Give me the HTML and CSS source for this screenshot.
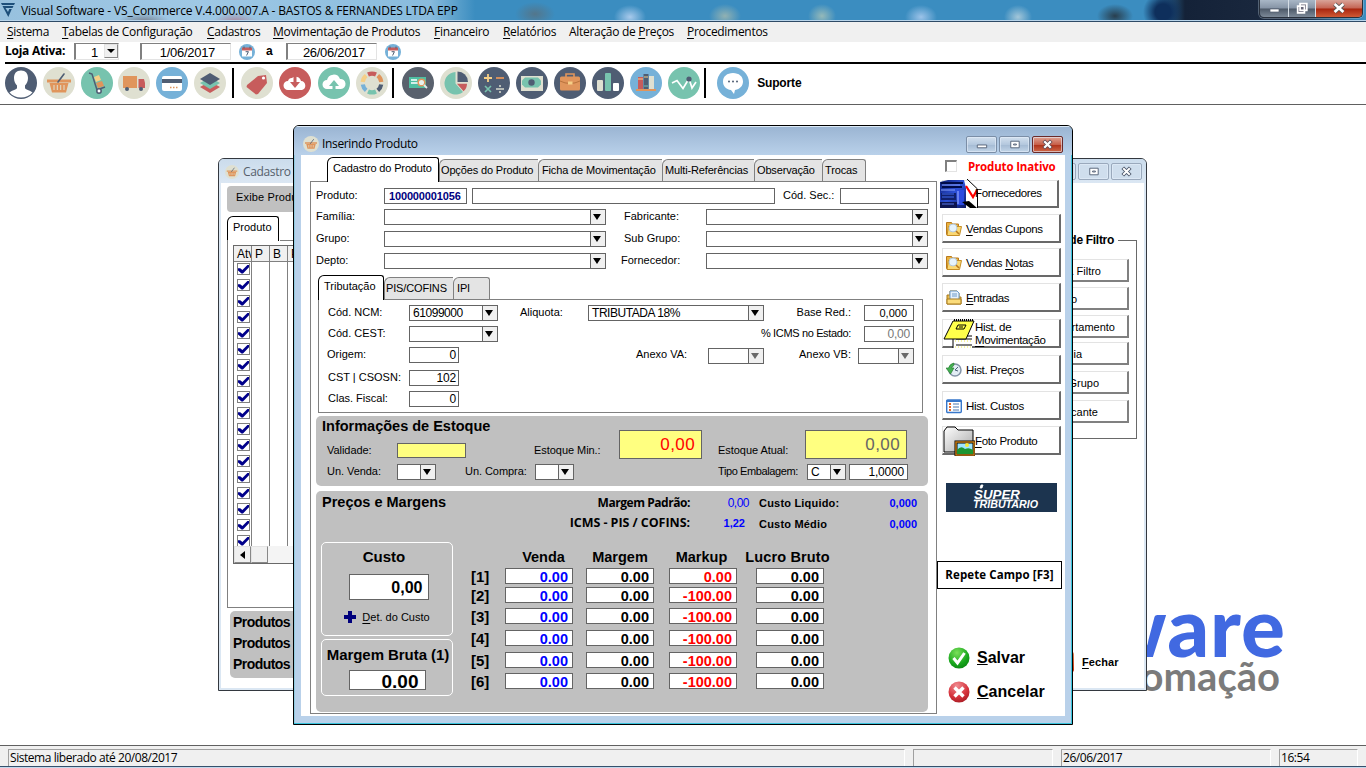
FILE: index.html
```html
<!DOCTYPE html>
<html lang="pt-BR">
<head>
<meta charset="utf-8">
<title>Visual Software - VS_Commerce</title>
<link rel="stylesheet" href="styles.css">
</head>
<body>
<svg class="defs" width="0" height="0">
  <defs>
    <linearGradient id="gTruck" x1="0" y1="0" x2="1" y2="1"><stop offset="0" stop-color="#0a1c70"/><stop offset=".5" stop-color="#2c50d8"/><stop offset="1" stop-color="#0b1760"/></linearGradient>
    <radialGradient id="gGreen" cx=".4" cy=".25" r=".9"><stop offset="0" stop-color="#7be05a"/><stop offset=".6" stop-color="#17a51c"/><stop offset="1" stop-color="#067a0c"/></radialGradient>
    <radialGradient id="gRed" cx=".4" cy=".2" r=".9"><stop offset="0" stop-color="#f08a90"/><stop offset=".6" stop-color="#d5323b"/><stop offset="1" stop-color="#a01820"/></radialGradient>
    <linearGradient id="gFolder" x1="0" y1="0" x2="1" y2="1"><stop offset="0" stop-color="#fff"/><stop offset="1" stop-color="#a8a8a8"/></linearGradient>
  </defs>
  <symbol id="basket" viewBox="0 0 32 32"><circle cx="16" cy="16" r="16" fill="#dfe0d1"/><path d="M4 12.500h24v3H4zM6.500 16h19L23 25.500H9z" fill="#e0955c"/><path d="M11 18v5M14.300 18v5M17.700 18v5M21 18v5" stroke="#dfe0d1" stroke-width="1"/><path d="M15 15 21 7" stroke="#4f5d73" stroke-width="1.600" stroke-linecap="round"/></symbol>
  <symbol id="calendar" viewBox="0 0 16 16"><circle cx="8" cy="8" r="8" fill="#76b1d8"/><path d="M3 4h10v8.500H3z" fill="#fff"/><path d="M3 3.500h10v3H3z" fill="#c75c5c"/><path d="M5 2.500v2M11 2.500v2" stroke="#4f5d73"/><path d="M6.600 7.700h2.800L7.600 11.500" stroke="#4f5d73" fill="none"/></symbol>
  <symbol id="folder" viewBox="0 0 16 16"><path d="M.5 1.500h5l1 1.500h6v10.500H.5z" fill="#e9b23f" stroke="#b9791c"/><path d="M2.500 5.500h13l-2 9H1z" fill="#fbd873" stroke="#c58f27"/><circle cx="7" cy="7" r="4" fill="#e6f3fc" stroke="#b4c9dc"/><path d="m10 10 3 3" stroke="#b9791c" stroke-width="1.600"/></symbol>
</svg>

<header class="titlebar">
  <svg class="applogo" viewBox="0 0 14 14"><path d="M0 0h14l-1 2H1zM1.500 3h11l-1 2h-7L7 9l1.300-3h2.500L7.300 14z" fill="#1d4f7a"/></svg>
  <span class="apptitle">Visual Software - VS_Commerce V.4.000.007.A - BASTOS &amp; FERNANDES LTDA EPP</span>
  <div class="winctl">
    <span class="wc wmin"><svg viewBox="0 0 28 17"><path d="M10 9h9v3h-9z" fill="#fff" stroke="#555e70" stroke-width=".7"/></svg></span>
    <span class="wc wmax"><svg viewBox="0 0 27 17"><path d="M11.500 3.500h7v7h-7zM9 6h7v7H9z" fill="#667" stroke="#fff" stroke-width="1.800"/></svg></span>
    <span class="wc wclose"><svg viewBox="0 0 47 17"><path d="m19 4 9 8m0-8-9 8" stroke="#555" stroke-width="4.500"/><path d="m19 4 9 8m0-8-9 8" stroke="#fff" stroke-width="2.800"/></svg></span>
  </div>
</header>

<nav class="menubar">
  <span class="m1"><u>S</u>istema</span><span class="m2"><u>T</u>abelas de Configuração</span><span class="m3"><u>C</u>adastros</span><span class="m4"><u>M</u>ovimentação de Produtos</span><span class="m5"><u>F</u>inanceiro</span><span class="m6"><u>R</u>elatórios</span><span class="m7">Alteração de <u>P</u>reços</span><span class="m8"><u>P</u>rocedimentos</span>
</nav>

<div class="filterbar">
  <b class="loja">Loja Ativa:</b>
  <span class="sunk store">1<i class="drop"></i></span>
  <span class="sunk d1">1/06/2017</span>
  <svg class="cal"><use href="#calendar"/></svg>
  <b class="a">a</b>
  <span class="sunk d2">26/06/2017</span>
  <svg class="cal"><use href="#calendar"/></svg>
</div>

<div class="toolbar">
  <div class="tools g1">
    <svg viewBox="0 0 32 32"><circle cx="16" cy="16" r="16" fill="#4f5d73"/><path d="M16 3.500c-4.700 0-7 3-7 7.500 0 3 1.200 6 3 7.500v2.500c0 1.800-5 2-7.500 4.500 3 3.500 7 5 11.500 5s8.500-1.500 11.500-5C25 23 20 22.800 20 21v-2.500c1.800-1.500 3-4.500 3-7.500 0-4.500-2.300-7.500-7-7.500z" fill="#fff"/></svg>
    <svg><use href="#basket"/></svg>
    <svg viewBox="0 0 32 32"><circle cx="16" cy="16" r="16" fill="#77c3ae"/><path d="m8 6 3 1 5 16 8-3" stroke="#4f5d73" stroke-width="1.500" fill="none"/><path d="m13 10 5-2 2 5-5 2z" fill="#f5cf87"/><path d="m15 16 6-2 2 5-6 2z" fill="#e0955c"/><circle cx="18" cy="24" r="2.200" fill="#fff" stroke="#4f5d73" stroke-width="1.500"/></svg>
    <svg viewBox="0 0 32 32"><circle cx="16" cy="16" r="16" fill="#dfe0d1"/><path d="M5 9h14v12H5z" fill="#e0955c"/><path d="M20.500 12H26l1 4v5h-6.500z" fill="#c75c5c"/><circle cx="9" cy="22" r="2" fill="#4f5d73"/><circle cx="23" cy="22" r="2" fill="#4f5d73"/></svg>
    <svg viewBox="0 0 32 32"><circle cx="16" cy="16" r="16" fill="#76b1d8"/><rect x="6" y="9" width="20" height="15" rx="2" fill="#fff"/><path d="M6 12h20v4H6z" fill="#4f5d73"/><path d="M14 20.500h9" stroke="#e0955c" stroke-width="1.500" stroke-dasharray="1.500 1.500"/></svg>
    <svg viewBox="0 0 32 32"><circle cx="16" cy="16" r="16" fill="#dfe0d1"/><path d="m6 20 10-5.500L26 20l-10 6z" fill="#c75c5c"/><path d="m6 16 10-5.500L26 16l-10 6z" fill="#77c3ae"/><path d="m6 12 10-6 10 6-10 6z" fill="#4f5d73"/></svg>
  </div>
  <i class="sep"></i>
  <div class="tools g2">
    <svg viewBox="0 0 32 32"><circle cx="16" cy="16" r="16" fill="#dfe0d1"/><path d="m6 18 11-9 8-1 1 8-9 11-2 .5L5.500 20z" fill="#c75c5c"/><circle cx="22.500" cy="11" r="1.600" fill="#fff"/></svg>
    <svg viewBox="0 0 32 32"><circle cx="16" cy="16" r="16" fill="#c75c5c"/><path d="M9 23a4.500 4.500 0 0 1 0-9 4 4 0 0 1 4-3 5.500 5.500 0 0 1 9 3 4.600 4.600 0 0 1 1 9z" fill="#fff"/><path d="M16 7v10" stroke="#c75c5c" stroke-width="3"/><path d="M11 15h10l-5 6z" fill="#c75c5c"/></svg>
    <svg viewBox="0 0 32 32"><circle cx="16" cy="16" r="16" fill="#77c3ae"/><path d="M9 22a4.500 4.500 0 0 1 0-9 6.800 6.800 0 0 1 13-1 5 5 0 0 1 1 10z" fill="#fff"/><path d="M16 27V18" stroke="#77c3ae" stroke-width="3"/><path d="M11 19h10l-5-6z" fill="#77c3ae"/></svg>
    <svg viewBox="0 0 32 32"><circle cx="16" cy="16" r="16" fill="#dfe0d1"/><g fill="none" stroke-width="4.200"><path d="M12 7.500a9.300 9.300 0 0 1 8 0" stroke="#c75c5c"/><path d="M21.800 8.700a9.300 9.300 0 0 1 3.500 6.200" stroke="#e0955c"/><path d="M25.200 17.500a9.300 9.300 0 0 1-3.400 5.800" stroke="#4f5d73"/><path d="M20 24.500a9.300 9.300 0 0 1-8 0" stroke="#77c3ae"/><path d="M10.200 23.300a9.300 9.300 0 0 1-3.400-5.800" stroke="#76b1d8"/><path d="M6.700 14.900a9.300 9.300 0 0 1 3.500-6.200" stroke="#f5cf87"/></g></svg>
  </div>
  <i class="sep s2"></i>
  <div class="tools g3">
    <svg viewBox="0 0 32 32"><circle cx="16" cy="16" r="16" fill="#59616d"/><path d="M7 10h17v11H7z" fill="#4fbfa2"/><path d="M9 13h6M9 16h8" stroke="#fff" stroke-width="1.300"/><circle cx="19.500" cy="15.500" r="3.300" fill="#e8f2ee" stroke="#e0955c" stroke-width="1.500"/><path d="m22 18 3 3" stroke="#e8e8e8" stroke-width="1.800"/></svg>
    <svg viewBox="0 0 32 32"><circle cx="16" cy="16" r="16" fill="#dfe0d1"/><path d="M15.500 16.500V5A11.300 11.300 0 1 0 23 25z" fill="#77c3ae"/><path d="M17.500 15V4.500A10.500 10.500 0 0 1 28 15z" fill="#4f5d73"/><path d="M17 16.800h10a10 10 0 0 1-3.500 7.500z" fill="#c75c5c"/></svg>
    <svg viewBox="0 0 32 32"><circle cx="16" cy="16" r="16" fill="#4f5d73"/><path d="M6 11h8M10 7v8" stroke="#f5cf87" stroke-width="1.800"/><path d="M18 11h8" stroke="#e0955c" stroke-width="1.800"/><path d="m7 19 6 6m0-6-6 6" stroke="#77c3ae" stroke-width="1.600"/><path d="M18 22h8" stroke="#dfe0d1" stroke-width="1.400"/><circle cx="22" cy="19" r="1" fill="#dfe0d1"/><circle cx="22" cy="25" r="1" fill="#dfe0d1"/></svg>
    <svg viewBox="0 0 32 32"><circle cx="16" cy="16" r="16" fill="#4f5d73"/><path d="M5 9h22v15H5z" fill="#dfe0d1"/><path d="M9 10.500h13l3 3v4l-3 3H9l-3-3v-4z" fill="#77c3ae"/><circle cx="15.500" cy="15.500" r="3.200" fill="#4f5d73"/></svg>
    <svg viewBox="0 0 32 32"><circle cx="16" cy="16" r="16" fill="#4f5d73"/><path d="M12 10V7h8v3" fill="none" stroke="#e0955c" stroke-width="1.600"/><rect x="6" y="9.500" width="20" height="14" rx="1.500" fill="#e0955c"/><path d="M6 14q10 5 20 0" fill="none" stroke="#b8733d"/><rect x="14" y="14.500" width="4.500" height="3" fill="#f5cf87"/></svg>
    <svg viewBox="0 0 32 32"><circle cx="16" cy="16" r="16" fill="#4f5d73"/><rect x="5" y="13" width="6" height="11" rx="1" fill="#dfe0d1"/><rect x="13" y="6" width="6" height="18" rx="1" fill="#77c3ae"/><rect x="21" y="16" width="6" height="8" rx="1" fill="#fff"/></svg>
    <svg viewBox="0 0 32 32"><circle cx="16" cy="16" r="16" fill="#76b1d8"/><path d="M8 10h5v12H8z" fill="#c75c5c"/><path d="M13.500 7h5v15h-5z" fill="#4f5d73"/><path d="M19 9h5v13h-5z" fill="#dfe0d1"/><path d="M8 12h5M14 10h4" stroke="#f5cf87"/><path d="M14 19h4" stroke="#77c3ae"/><path d="M6 22h20v2H6z" fill="#e0955c"/></svg>
    <svg viewBox="0 0 32 32"><circle cx="16" cy="16" r="16" fill="#77c3ae"/><path d="m4 16 5-2.500 6 8 6-10 3 9.500 4-6" fill="none" stroke="#fff" stroke-width="1.700"/><circle cx="21" cy="12" r="2.600" fill="#4f5d73"/></svg>
  </div>
  <i class="sep s3"></i>
  <div class="tools g4">
    <svg viewBox="0 0 32 32"><circle cx="16" cy="16" r="16" fill="#76b1d8"/><path d="M16 6c6 0 10 3.500 10 8.500 0 4.500-3 7.500-8 8.500l-1 4-3-4c-5-.6-8-4-8-8.500C6 9.500 10 6 16 6z" fill="#fff"/><g fill="#4f5d73"><circle cx="12" cy="14.500" r="1"/><circle cx="16" cy="14.500" r="1"/><circle cx="20" cy="14.500" r="1"/></g></svg>
    <b>Suporte</b>
  </div>
</div>

<main class="workspace">
  <div class="brand"><div class="brand1">software</div><div class="brand2">automação</div></div>

  <section class="win back">
    <div class="wtitle"><svg class="wicon"><use href="#basket"/></svg><span>Cadastro</span>
      <div class="btns"><i class="wb"></i><i class="wb"><svg viewBox="0 0 28 16"><path d="M10 4.500h9v7h-9zM13 7.500h3v1h-3z" fill="#fff" stroke="#556278"/></svg></i><i class="wb"><svg viewBox="0 0 28 16"><path d="m10 4 8 8m0-8-8 8" stroke="#4b566a" stroke-width="4"/><path d="m10.500 4.500 7 7m0-7-7 7" stroke="#fff" stroke-width="2"/></svg></i></div>
    </div>
    <div class="bclient">
      <div class="bleft">
        <div class="exibe">Exibe Produtos</div>
        <div class="btab">Produto</div>
        <div class="bpanel">
          <div class="bgrid">
            <div class="ghead"><span>Atv</span><span>P</span><span>B</span><span>P</span></div>
            <div class="gbody">
              <div class="checks">
                <i></i><i></i><i></i><i></i><i></i><i></i><i></i><i></i><i></i><i></i><i></i><i></i><i></i><i></i><i></i><i></i><i></i><i></i>
              </div>
              <div class="col"></div><div class="col"></div><div class="col"></div>
            </div>
            <div class="hscroll"><i class="al"></i><i></i></div>
          </div>
        </div>
        <div class="totals"><b>Produtos</b><b>Produtos</b><b>Produtos</b></div>
      </div>
      <div class="bright">
        <fieldset class="filters"><legend>Opções de Filtro</legend>
          <span class="fb f1">Limpa Filtro</span><span class="fb f2">Grupo</span><span class="fb f3">Departamento</span><span class="fb f4">Família</span><span class="fb f5">Sub Grupo</span><span class="fb f6">Fabricante</span>
        </fieldset>
        <div class="fechar"><i></i><b><u>F</u>echar</b></div>
      </div>
    </div>
  </section>

  <section class="win front">
    <div class="wtitle"><svg class="wicon"><use href="#basket"/></svg><span>Inserindo Produto</span>
      <div class="btns"><i class="wb"><svg viewBox="0 0 28 16"><path d="M9.500 8.500h10v3h-10z" fill="#fff" stroke="#556278"/></svg></i><i class="wb"><svg viewBox="0 0 28 16"><path d="M10 4.500h9v7h-9zM13 7.500h3v1h-3z" fill="#fff" stroke="#556278"/></svg></i><i class="wb red"><svg viewBox="0 0 28 16"><path d="m10 4 8 8m0-8-8 8" stroke="#5b4650" stroke-width="4"/><path d="m10.500 4.500 7 7m0-7-7 7" stroke="#fff" stroke-width="2.400"/></svg></i></div>
    </div>
    <div class="client">
      <div class="left">
        <div class="tabs"><span class="tab on t1">Cadastro do Produto</span><span class="tab t2">Opções do Produto</span><span class="tab t3">Ficha de Movimentação</span><span class="tab t4">Multi-Referências</span><span class="tab t5">Observação</span><span class="tab t6">Trocas</span></div>
        <div class="page">
          <div class="row r1"><label>Produto:</label><span class="field code">100000001056</span><span class="field"></span><label>Cód. Sec.:</label><span class="field"></span></div>
          <div class="row r2"><label>Família:</label><span class="field combo w222"><i></i></span><label>Fabricante:</label><span class="field combo"><i></i></span></div>
          <div class="row r2"><label>Grupo:</label><span class="field combo w222"><i></i></span><label>Sub Grupo:</label><span class="field combo"><i></i></span></div>
          <div class="row r2"><label>Depto:</label><span class="field combo w222"><i></i></span><label class="forn">Fornecedor:</label><span class="field combo"><i></i></span></div>

          <div class="tabs sub"><span class="tab on u1">Tributação</span><span class="tab u2">PIS/COFINS</span><span class="tab u3">IPI</span></div>
          <div class="subpage">
            <div class="row r3"><label>Cód. NCM:</label><span class="field combo w89"><em>61099000</em><i></i></span><label>Aliquota:</label><span class="field combo"><em>TRIBUTADA 18%</em><i></i></span><label class="rt">Base Red.:</label><span class="field num six">0,000</span></div>
            <div class="row r3"><label>Cód. CEST:</label><span class="field combo w89"><i></i></span><label></label><span></span><label class="rt icms">% ICMS no Estado:</label><span class="field num dim">0,00</span></div>
            <div class="row r4"><label class="or">Origem:</label><span class="field num w50">0</span><label>Anexo VA:</label><span class="field combo off"><i></i></span><label class="rt">Anexo VB:</label><span class="field combo off"><i></i></span></div>
            <div class="row r3 r5"><label>CST | CSOSN:</label><span class="field num w50">102</span></div>
            <div class="row r3"><label>Clas. Fiscal:</label><span class="field num w50">0</span></div>
          </div>

          <div class="gray stock">
            <h3>Informações de Estoque</h3>
            <label class="s-val">Validade:</label><span class="field yel s-valf"></span>
            <label class="s-min">Estoque Min.:</label><span class="field yel big s-minf">0,00</span>
            <label class="s-at">Estoque Atual:</label><span class="field yel big grayt s-atf">0,00</span>
            <label class="s-uv">Un. Venda:</label><span class="field combo w39 s-uvf"><i></i></span>
            <label class="s-uc">Un. Compra:</label><span class="field combo w39 s-ucf"><i></i></span>
            <label class="s-te">Tipo Embalagem:</label><span class="field combo w39 s-tef"><em>C</em><i></i></span>
            <span class="field num s-q">1,0000</span>
          </div>

          <div class="gray prices">
            <div class="phead">
              <h3>Preços e Margens</h3><b class="pl pl1">Margem Padrão:</b><span class="pv">0,00</span><b class="pc">Custo Liquido:</b><b class="px">0,000</b>
              <span></span><b class="pl pl2">ICMS - PIS / COFINS:</b><b class="pv p2">1,22</b><b class="pc low">Custo Médio</b><b class="px low">0,000</b>
            </div>
            <div class="pbody">
              <div class="pleft">
                <div class="box b1"><b>Custo</b><span class="field cost">0,00</span><div class="det"><svg viewBox="0 0 12 12"><path d="M4 0h4v4h4v4H8v4H4V8H0V4h4z" fill="#00007c"/></svg><span><u>D</u>et. do Custo</span></div></div>
                <div class="box b2"><b>Margem Bruta (1)</b><span class="field mb">0.00</span></div>
              </div>
              <div class="ptable">
                <b></b><b class="h h1">Venda</b><b class="h">Margem</b><b class="h h3c">Markup</b><b class="h h4c">Lucro Bruto</b>
                <b class="n">[1]</b><b class="field v blue">0.00</b><b class="field v">0.00</b><b class="field v rd">0.00</b><b class="field v">0.00</b>
                <b class="n">[2]</b><b class="field v blue">0.00</b><b class="field v">0.00</b><b class="field v rd">-100.00</b><b class="field v">0.00</b>
                <b class="n">[3]</b><b class="field v blue">0.00</b><b class="field v">0.00</b><b class="field v rd">-100.00</b><b class="field v">0.00</b>
                <b class="n">[4]</b><b class="field v blue">0.00</b><b class="field v">0.00</b><b class="field v rd">-100.00</b><b class="field v">0.00</b>
                <b class="n">[5]</b><b class="field v blue">0.00</b><b class="field v">0.00</b><b class="field v rd">-100.00</b><b class="field v">0.00</b>
                <b class="n">[6]</b><b class="field v blue">0.00</b><b class="field v">0.00</b><b class="field v rd">-100.00</b><b class="field v">0.00</b>
              </div>
            </div>
          </div>
        </div>
      </div>

      <aside class="right">
        <div class="inativo"><i></i><b>Produto Inativo</b></div>
        <div class="btn k1"><svg viewBox="0 0 38 29"><path d="M0 3 8 1h16l2 8v20H0z" fill="url(#gTruck)"/><path d="M1 4h22M2 8h20" stroke="#000b48" stroke-width="2"/><path d="M2 6h18M1 11h14" stroke="#88a2ff"/><path d="M1 14h15v7H1z" fill="#10206c"/><path d="M2 15h12M2 18h12" stroke="#3d68ee"/><path d="M17 11h7v15h-7z" fill="#2b4ae0"/><path d="M18 12v13" stroke="#a8b8ff"/><path d="M0 23h17v6H0z" fill="#0d1550"/><path d="M2 25h12" stroke="#5878ea"/><path d="M26 2h6l6 8v19H26z" fill="#fff"/><path d="M22 23l8 6h7l-8-7z" fill="#000"/><path d="m27 0 10.500 10v19" stroke="#000" fill="none"/><path d="m26 7 7 11 4-7" stroke="red" stroke-width="2.200" fill="none"/></svg><span>Fornecedores</span></div>
        <div class="btn k2"><svg><use href="#folder"/></svg><span><u>V</u>endas Cupons</span></div>
        <div class="btn k3"><svg><use href="#folder"/></svg><span>Vendas <u>N</u>otas</span></div>
        <div class="btn k4"><svg viewBox="0 0 16 16"><path d="M1 5h3V1h7l2 2v4h2v7H1z" fill="#e9b949" stroke="#a87b1d"/><path d="M4 1h7l2 2v7H4z" fill="#e4f0fb" stroke="#6d9ac9"/><path d="M6 4h5M6 6h5" stroke="#6d9ac9"/><path d="M1 9h14v5H1z" fill="#fbdc7b" stroke="#a87b1d"/></svg><span><u>E</u>ntradas</span></div>
        <div class="btn k5 wide"><svg viewBox="0 0 32 30"><path d="M10 14h19v15H10z" fill="#fff"/><path d="M10 29V17M13 17h16M13 20h16M13 26h16" stroke="#000"/><path d="M12 22h17M12 28h17" stroke="#eee84a" stroke-dasharray="1 2"/><path d="M10 2h21l-8 18H1z" fill="#ffff4b" stroke="#000"/><path d="M11 1h20" stroke="#000" stroke-width="2" stroke-dasharray="1 1"/><path d="m15 6-2 4h8l2-4zM16 8h4" fill="none" stroke="#000"/></svg><span>Hist. de<br><u>M</u>ovimentação</span></div>
        <div class="btn k6"><svg viewBox="0 0 16 16"><circle cx="9" cy="8" r="6" fill="#e3edf5" stroke="#8494a8" stroke-width="1.500"/><path d="M9 8l3-3M9 8l3 1" stroke="#4b6077" fill="none"/><path d="M8 1A7 7 0 0 0 2.500 6H0l4.500 6L8 6H5.500L8 3z" fill="#45b052" stroke="#21752c" stroke-width=".6"/></svg><span>Hist. Preços</span></div>
        <div class="btn k7"><svg viewBox="0 0 16 16"><rect x=".7" y="2" width="14.600" height="12.500" rx="1" fill="#fff" stroke="#3777ca" stroke-width="1.400"/><path d="M.7 3h14.600" stroke="#3777ca" stroke-width="2"/><path d="M3 6h2M3 9h2M3 12h2" stroke="#e3682b" stroke-width="1.800"/><path d="M7 6h6M7 9h6M7 12h6" stroke="#4876b0"/></svg><span>Hist. Custos</span></div>
        <div class="btn k8 wide"><svg viewBox="0 0 32 30"><path d="M1 5 4 1h8l3 3h15v22H1z" fill="url(#gFolder)" stroke="#000"/><path d="M13 16h18v13H13z" fill="#9de5ff" stroke="#000" stroke-width="3"/><path d="M13 16h18v13H13z" fill="none" stroke="#c27a14" stroke-width="1.500"/><path d="M14 24q4-5 8-1 4-2 8 1v4H14z" fill="#1c9531"/><circle cx="24" cy="19" r="2" fill="#f8e936"/></svg><span><u>F</u>oto Produto</span></div>
        <div class="super"><svg viewBox="0 0 111 29"><g fill="#fff" font-family="Liberation Sans" font-weight="bold" font-style="italic"><text x="28" y="16" font-size="13" textLength="46" lengthAdjust="spacingAndGlyphs">SUPER</text><text x="27" y="25" font-size="10" textLength="65" lengthAdjust="spacingAndGlyphs">TRIBUTARIO</text></g><path d="m34 5 1-3h2l-1 3zM28 17h46" stroke="#fff" fill="#fff" stroke-width=".8"/></svg></div>
        <div class="repete">Repete Campo [F3]</div>
        <div class="act a1"><svg viewBox="0 0 22 22"><circle cx="11" cy="11" r="10.500" fill="url(#gGreen)"/><path d="m5.500 11 4 5 7-10" fill="none" stroke="#fff" stroke-width="3"/></svg><b><u>S</u>alvar</b></div>
        <div class="act a2"><svg viewBox="0 0 22 22"><circle cx="11" cy="11" r="10.500" fill="url(#gRed)"/><path d="m6.500 6.500 9 9m0-9-9 9" fill="none" stroke="#fff" stroke-width="3.400"/></svg><b><u>C</u>ancelar</b></div>
      </aside>
    </div>
  </section>
</main>

<footer class="status"><span class="st1">Sistema liberado até 20/08/2017</span><span class="st2"></span><span class="st3">26/06/2017</span><span class="st4">16:54</span></footer>
<div class="taskedge"></div>
</body>
</html>
```
FILE: styles.css
```css
* { box-sizing: border-box; }
body { margin: 0; width: 1366px; height: 768px; overflow: hidden; background: #fff; color: #000; font: 11px/16px "Liberation Sans", Arial, sans-serif; display: flex; flex-direction: column; }
svg { display: block; flex: none; }
i, em { font-style: normal; }
span, label, b { white-space: nowrap; }
.defs { position: absolute; }

/* Title bar */
.titlebar { height: 22px; flex: none; display: flex; border-bottom: 1px solid #2e4a66; box-shadow: inset 0 -1px #b8d4ea;
  background:
    radial-gradient(ellipse 26px 9px at 144px 22px, #5a4a5099, transparent),
    radial-gradient(ellipse 22px 9px at 235px 22px, #b9485588, transparent),
    linear-gradient(90deg, #a4c8e2e0, #acd0eae0 200px, #9ac6e4d0 430px, #7fb6d8a0 450px, transparent 475px),
    radial-gradient(ellipse 20px 12px at 535px 14px, #59707ecc, transparent),
    radial-gradient(ellipse 16px 12px at 630px 17px, #b9d3f2dd, transparent),
    radial-gradient(ellipse 16px 12px at 725px 16px, #9fb7b0dd, transparent),
    radial-gradient(ellipse 14px 12px at 822px 16px, #a3c0b8dd, transparent),
    radial-gradient(ellipse 16px 12px at 921px 17px, #abcbefdd, transparent),
    radial-gradient(ellipse 14px 12px at 1018px 17px, #b3cfdddd, transparent),
    radial-gradient(ellipse 18px 12px at 1115px 16px, #26323cdd, transparent),
    radial-gradient(ellipse 20px 20px at 1163px 12px, #0e2f5c 40%, transparent),
    linear-gradient(90deg, transparent 1155px, #142238 1185px, #1c2a40 1300px, #3b8dc0 1364px),
    #3b8dc0; }
.applogo { width: 14px; height: 14px; margin: 3px 0 0 1px; }
.apptitle { margin: 2px 0 0 6px; font: 12px/17px "Open Sans", sans-serif; letter-spacing: -0.160px; }
.winctl { display: flex; margin-left: auto; margin-right: 3px; width: 104px; height: 18px; border: 1px solid #28303c; border-top: 0; border-radius: 0 0 5px 5px; overflow: hidden; box-shadow: 0 0 0 1px #c9d8e555; }
.wc { height: 17px; background: linear-gradient(#a9b7c6, #8593a5 48%, #4d5968 52%, #7c8998); border-right: 1px solid #d5dde5; }
.wmin { width: 29px; } .wmax { width: 27px; } .wclose { flex: 1; border: 0; background: linear-gradient(#d9a398, #c46453 48%, #a8250e 52%, #cf5a35); }
.wc svg { width: 100%; height: 17px; }

/* Menu */
.menubar { height: 20px; flex: none; background: #f0f0f0; display: flex; font: 12px/20px "Open Sans", sans-serif; letter-spacing: -0.3px; padding-left: 7px; }
u { text-underline-offset: 2px; text-decoration-thickness: 1px; }
.m1 { width: 55px; } .m2 { width: 145px; } .m3 { width: 66px; } .m4 { width: 161px; } .m5 { width: 69px; } .m6 { width: 66px; } .m7 { width: 118px; }

.filterbar { height: 20px; flex: none; display: flex; padding-left: 5px; font-size: 12px; line-height: 18px; }
.loja { width: 69px; font: bold 12px/18px "Open Sans", sans-serif; letter-spacing: -0.250px; }
.sunk { height: 17px; margin-top: 1px; border: 1px solid #e3e3e3; border-top-color: #808080; border-left: 2px solid #808080; line-height: 18px; overflow: hidden; font-size: 13px; letter-spacing: -0.3px; }
.store { width: 45px; display: flex; justify-content: flex-end; }
.drop { width: 14px; height: 14px; margin: 0 0 0 6px; background: #f0f0f0; border: 1px solid #e3e3e3; border-right-color: #888; border-bottom-color: #888; display: grid; place-items: center; }
.drop::after { content: ""; border: 4px solid transparent; border-top-color: #000; border-bottom: 0; }
.d1 { width: 91px; margin-left: 21px; text-align: right; padding-right: 15px; }
.d2 { width: 91px; text-align: right; padding-right: 11px; }
.cal { width: 16px; height: 16px; margin: 2px 0 0 8px; }
.a { width: 31px; padding-left: 11px; }

/* Toolbar */
.toolbar { height: 43px; flex: none; display: flex; border-bottom: 1px solid #606060; background: linear-gradient(#000, #000) 5px 0 / 1361px 2px no-repeat; padding: 5px 0 0 5px; }
.tools { display: flex; } .tools svg { width: 32px; height: 32px; }
.g1 { gap: 5.800px; } .g2 { gap: 6.400px; margin-left: 7px; } .g3 { gap: 6px; margin-left: 8px; } .g4 { margin-left: 11px; }
.g4 b { font-size: 12px; line-height: 32px; margin-left: 8px; letter-spacing: -.150px; }
.sep { width: 2px; height: 30px; background: #000; margin-left: 6px; margin-top: 1px; }
.s2 { margin-left: 4px; } .s3 { margin-left: 4px; }

.workspace { position: relative; height: 640px; flex: none; overflow: hidden; }
.brand { position: absolute; right: 80px; top: 474px; text-align: right; font-family: Lato, sans-serif; }
.brand1 { font-weight: 900; font-size: 82px; line-height: 92px; color: #4169e1; letter-spacing: 1px; }
.brand2 { font-weight: bold; font-size: 40px; line-height: 48px; color: #7b7b7b; margin: -19px 6px 0 0; }

/* Windows */
.win { position: absolute; border: 1px solid #33383f; border-radius: 6px 6px 0 0; overflow: hidden; }
.back { left: 218px; top: 53px; width: 929px; height: 533px; background: #dbe7f3; padding: 0 2px 2px; color: #000; }
.front { left: 293px; top: 20px; width: 780px; height: 600px; border-color: #000; background: #b9d1ea; padding: 0 7px 8px; box-shadow: inset -1px -1px #38c4dd, inset 1px 0 #8fcbe0; }
.wtitle { height: 24px; display: flex; align-items: center; font: 12px/16px "Open Sans", sans-serif; letter-spacing: -0.350px; }
.back .wtitle { color: #56606c; margin: 0 -2px; padding: 1px 4px 0 6px; background: linear-gradient(#cbdcec, #dbe7f3); }
.front .wtitle { height: 29px; margin: 0 -7px; padding: 7px 9px 0 9px; background: linear-gradient(#9ab4d2, #b9d1ea); box-shadow: inset 0 1px #dceaf6; }
.wicon { width: 14px; height: 14px; margin-right: 4px; } .front .wicon { width: 16px; height: 16px; margin-right: 3px; }
.btns { display: flex; margin-left: auto; gap: 2px; }
.wb { width: 31px; height: 17px; border: 1px solid #7b8ea6; border-radius: 2px; background: linear-gradient(#d3e0ee, #b4c8de 50%, #a4bad3 52%, #c2d5e8); box-shadow: inset 0 0 0 1px #e4eefa99; }
.back .wb { border-color: #9aa9bc; background: #cfdeed; }
.wb svg { width: 29px; height: 15px; }
.front .wb.red { border-color: #6a2a2a; background: linear-gradient(#dfa394, #c8604a 50%, #ae3018 52%, #d0694a); }

.bclient { background: #fff; height: 505px; display: flex; }
.bleft { width: 305px; padding-left: 5px; }
.exibe { margin: 3px 0 0 1px; height: 26px; background: #c0c0c0; border-radius: 4px; line-height: 23px; padding-left: 9px; letter-spacing: .15px; }
.btab { width: 52px; height: 25px; margin: 4px 0 0 1px; border: 1px solid #000; border-bottom: 0; border-radius: 6px 3px 0 0; background: #fff; padding: 2px 0 0 5px; line-height: 17px; }
.bpanel { margin: -1px 0 0 1px; height: 368px; border: 1px solid #808080; border-top: 0; padding: 5px 0 0 5px; background: linear-gradient(#808080,#808080) 52px 0 / 300px 1px no-repeat; }
.bgrid { border: 1px solid #696969; height: 319px; }
.ghead { height: 16px; display: flex; background: #f0f0f0; border-bottom: 1px solid #808080; font-size: 12px; line-height: 16px; }
.ghead span { width: 18px; overflow: hidden; padding-left: 3px; border-right: 1px solid #808080; }
.gbody { display: flex; height: 284px; overflow: hidden; }
.checks { width: 18px; border-right: 1px solid #808080; display: flex; flex-direction: column; align-items: flex-end; }
.checks i { width: 13px; height: 12px; flex: none; border: 1px solid #808080; margin: 1px 1px 3px 0; display: grid; place-items: center; }
.checks i::after { content: ""; width: 11px; height: 9px; background: #00008b; clip-path: polygon(0 42%, 0 68%, 32% 100%, 45% 100%, 100% 30%, 100% 0, 90% 0, 40% 60%, 20% 42%); }
.col { width: 18px; border-right: 1px solid #808080; }
.hscroll { display: flex; height: 17px; background: #f4f4f4; }
.hscroll i { width: 17px; border: 1px solid #888; border-top-color: #e3e3e3; border-left-color: #e3e3e3; background: #f0f0f0; display: grid; place-items: center; }
.al::after { content: ""; border: 4px solid transparent; border-right: 5px solid #000; border-left: 0; }
.totals { margin: 3px 0 0 4px; height: 67px; background: #c0c0c0; border-radius: 5px; padding: 1px 0 0 3px; display: flex; flex-direction: column; font-size: 14px; letter-spacing: -.550px; line-height: 21px; }

.bright { flex: 1; display: flex; flex-direction: column; align-items: flex-end; padding: 50px 7px 0 0; }
.filters { margin: 0; width: 130px; height: 206px; border: 1px solid #696969; padding: 12px 7px 0 0; display: flex; flex-direction: column; align-items: flex-end; }
.filters legend { font-weight: bold; font-size: 12px; margin-left: auto; margin-right: 11px; padding: 0 4px; line-height: 14px; letter-spacing: -.3px; }
.fb { width: 90px; height: 23px; flex: none; text-align: right; line-height: 22px; border: 2px solid #808080; border-width: 1px 2px 2px 1px; border-top-color: #e3e3e3; margin-bottom: 5px; }
.f1 { padding-right: 26px; } .f2 { padding-right: 50px; } .f3 { padding-right: 12px; margin-bottom: 4px; } .f4 { padding-right: 45px; margin-bottom: 6px; } .f5 { padding-right: 28px; margin-bottom: 6px; } .f6 { padding-right: 29px; }
.fechar { width: 73px; margin-top: 213px; display: flex; align-items: center; }
.fechar i { width: 10px; height: 20px; background: linear-gradient(#e08a60, #c63008); border-radius: 2px; }
.fechar b { margin-left: 8px; font-size: 11px; letter-spacing: .1px; }

/* Product form */
.client { background: #fff; height: 561px; display: flex; }
.left { width: 636px; padding-left: 9px; }
.right { width: 128px; }
.tabs { display: flex; height: 26px; align-items: flex-end; padding: 2px 0 0 17px; }
.tab { height: 22px; background: #e4e4e4; border: 1px solid #808080; border-bottom: 0; border-right: 0; border-radius: 6px 0 0 0; line-height: 20px; padding-left: 2px; letter-spacing: -.150px; }
.tab:last-child { border-right: 1px solid #808080; border-radius: 6px 3px 0 0; }
.tab.on { height: 25px; margin-bottom: -1px; border: 1px solid #000; border-bottom: 0; background: #fff; border-radius: 6px 3px 0 0; padding-left: 5px; line-height: 21px; }
.t1 { width: 112px; } .t2 { width: 99px; padding-left: 1px; } .t3 { width: 124px; padding-left: 3px; } .t4 { width: 92px; } .t5 { width: 68px; } .t6 { width: 44px; }
.page { height: 533px; border: 1px solid #808080; padding: 6px 0 0; }
.row { display: grid; height: 16px; }
.row label { line-height: 15px; }
.field { height: 16px; border: 1px solid #646464; background: #fff; display: block; line-height: 15px; overflow: hidden; }
.num { text-align: right; padding-right: 2px; font-size: 12px; letter-spacing: -.2px; }
.six { font-size: 11px; padding-right: 6px; letter-spacing: 0; }
.dim { color: #777; padding-right: 3px; }
.combo { display: flex; }
.combo i { width: 15px; height: 14px; flex: none; margin-left: auto; border-left: 1px solid #646464; background: #f0f0f0; display: grid; place-items: center; }
.combo i::after { content: ""; border: 4px solid transparent; border-top: 6px solid #000; border-bottom: 0; margin-right: 2px; }
.combo.off i::after { border-top-color: #696969; }
.combo em { padding-left: 3px; font-size: 12px; letter-spacing: -.450px; }
.w222 { width: 222px; } .w89 { width: 89px; } .w50 { width: 50px; } .w39 { width: 39px; }
.r1 { grid-template-columns: 68px 88px 311px 57px 89px; padding-left: 5px; margin-bottom: 5px; }
.r1 .field:nth-child(2) { width: 83px; } .r1 .field:nth-child(3) { width: 303px; }
.code { font-weight: bold; color: #000080; padding-left: 4px; letter-spacing: -.150px; }
.r2 { grid-template-columns: 68px 240px 82px 222px; padding-left: 5px; margin-bottom: 6px; }
.forn { margin-left: -3px; }
.sub { height: 24px; padding: 0 0 0 7px; }
.u1 { width: 66px; } .tab.on.u1 { letter-spacing: 0; } .u2 { width: 69px; padding-left: 1px; } .u3 { width: 37px; padding-left: 3px; }
.subpage { margin-left: 7px; width: 605px; height: 114px; border: 1px solid #808080; padding-top: 5px; }
.subpage .row { margin-bottom: 5px; }
.subpage label:first-child { padding-left: 9px; }
.subpage label.or { padding-left: 8px; }
.rt { text-align: right; padding-right: 13px; }
.icms { margin-left: -14px; letter-spacing: -.350px; }
.r3 { grid-template-columns: 90px 111px 68px 176px 100px 50px; }
.r4 { grid-template-columns: 90px 227px 72px 56px 94px 56px; }
.r4.row { margin-bottom: 7px; }
.r4 .rt { padding-right: 7px; } .r4 .off { margin-top: 1px; }

.gray { background: #c0c0c0; border-radius: 5px; margin-left: 5px; width: 612px; }
h3 { margin: 0; font-size: 14px; line-height: 18px; white-space: nowrap; }
.stock { margin-top: 3px; height: 70px; display: grid; grid-template: 14px 29px 5px 16px / 81px 68px 70px 84px 99px 87px 44px 59px; }
.stock h3 { grid-area: 1 / 1 / 3 / 5; margin: 1px 0 0 6px; align-self: start; font-size: 14.500px; }
.stock label { align-self: end; letter-spacing: -.050px; position: static; margin-bottom: 1px; }
.s-val { grid-area: 2 / 1; padding-left: 11px; } .s-valf { grid-area: 2 / 2; width: 69px; align-self: end; margin-bottom: 1px; height: 15px; }
.s-min { grid-area: 2 / 4; margin-left: -1px; } .s-minf { grid-area: 2 / 5; width: 83px; }
.s-at { grid-area: 2 / 6; } .s-atf { grid-area: 2 / 7 / 3 / 9; width: 102px; }
.s-uv { grid-area: 4 / 1; padding-left: 11px; } .s-uvf { grid-area: 4 / 2; }
.s-uc { grid-area: 4 / 3; } .s-ucf { grid-area: 4 / 4; }
.stock .s-te { grid-area: 4 / 6; letter-spacing: -.400px; } .s-tef { grid-area: 4 / 7; margin-left: 2px; } .s-q { grid-area: 4 / 8; padding-right: 3px; }
.yel { background: #ffff80; }
.big { height: 29px; text-align: right; font-size: 17px; line-height: 28px; color: #f00; padding-right: 6px; letter-spacing: .4px; }
.grayt { color: #666; }

.prices { margin-top: 5px; height: 221px; padding-top: 3px; }
.phead { display: grid; grid-template-columns: 180px 194px 59px 100px 68px; grid-template-rows: 18px 18px; row-gap: 2px; line-height: 18px; }
.phead h3 { padding-left: 6px; line-height: 16px; font-size: 14.500px; }
.pl { text-align: right; font: bold 12px/18px "Open Sans", sans-serif; }
.pl1 { letter-spacing: -.450px; } .pl2 { letter-spacing: -.050px; font-size: 12.500px; }
.pv { text-align: right; color: #00f; font-size: 12px; letter-spacing: -.5px; } .p2 { padding-right: 4px; font-size: 11px; letter-spacing: 0; }
.pc { padding-left: 10px; letter-spacing: .2px; } .px { color: #00f; text-align: right; }
.low { line-height: 20px; height: 18px; }
.pbody { display: flex; margin-top: 10px; }
.pleft { margin-left: 5px; width: 132px; }
.box { border: 1px solid #fff; border-radius: 5px; display: flex; flex-direction: column; align-items: center; font-size: 15px; }
.b1 { height: 94px; padding-top: 6px; } .b2 { height: 57px; margin-top: 3px; padding-top: 7px; }
.b1 b { margin-left: -6px; } .b2 b { letter-spacing: -.050px; padding-left: 2px; }
.cost { width: 80px; height: 26px; margin: 9px 0 0 3px; text-align: right; padding-right: 5px; font: bold 16px/25px "Liberation Sans"; }
.det { display: flex; gap: 6px; margin-top: 9px; font-size: 11px; }
.det svg { width: 12px; height: 12px; margin-top: 2px; }
.mb { width: 77px; height: 20px; margin-top: 7px; text-align: right; padding-right: 6px; font: bold 19px/22px "Liberation Sans"; }
.ptable { margin-left: 18px; display: grid; grid-template-columns: 34px 81px 83px 87px 68px; grid-template-rows: 26px 19px 21px 22px 22px 21px 16px; }
.h { font-size: 14.500px; line-height: 18px; padding-top: 6px; justify-self: start; width: 68px; display: flex; justify-content: center; }
.h1 { padding-left: 9px; } .h3c { padding-right: 3px; } .h4c { padding-right: 5px; letter-spacing: .150px; }
.n { font-size: 15px; line-height: 18px; }
.v { width: 68px; text-align: right; font-size: 14.500px; line-height: 17px; padding-right: 4px; }
.blue { color: #00f; } .rd { color: #f00; }

/* Side actions */
.inativo { display: flex; height: 25px; padding: 5px 0 0 8px; color: #f00; }
.inativo i { width: 12px; height: 12px; border: 1px solid #e3e3e3; border-top: 2px solid #808080; border-left: 2px solid #808080; }
.inativo b { font: bold 11.500px/13px "Open Sans", sans-serif; margin-left: 11px; letter-spacing: -.160px; }
.btn { margin: 0 0 6px 5px; width: 119px; height: 29px; border: 1px solid #e3e3e3; border-right: 2px solid #696969; border-bottom: 2px solid #696969; display: flex; align-items: center; font-size: 11.500px; line-height: 13px; padding: 2px 0 0 3px; letter-spacing: -.350px; background: #fff; }
.btn svg { width: 16px; height: 16px; margin-right: 4px; }
.k1 { width: 117px; height: 28px; padding: 0; } .k1 svg { width: 38px; height: 29px; margin: 0 -3px 0 -3px; }
.k2 { margin-bottom: 5px; } .k4, .k5, .k6 { margin-bottom: 7px; } .k7 { margin-bottom: 6px; }
.wide { padding: 2px 0 0; } .wide svg { width: 32px; height: 30px; margin: 0; }
.super { margin: 28px 0 0 9px; width: 111px; height: 29px; background: #1c344f; }
.super svg { width: 111px; height: 29px; }
.repete { margin: 49px 0 0 0; width: 125px; height: 28px; border: 1px solid #000; text-align: center; font: bold 11.500px/26px "Open Sans", sans-serif; white-space: nowrap; letter-spacing: .1px; }
.act { display: flex; align-items: center; height: 22px; margin-left: 11px; font-size: 16px; }
.act svg { width: 22px; height: 22px; margin-right: 7px; } .act u { text-underline-offset: 1px; }
.a1 { margin-top: 58px; } .a2 { margin-top: 12px; }

.status { height: 21px; flex: none; border-top: 1px solid #606060; background: #f0f0f0; padding: 3px 0 0 8px; display: flex; gap: 8px; font: 12px/16px "Open Sans", sans-serif; letter-spacing: -.450px; }
.status span { height: 17px; border-top: 1px solid #a0a0a0; border-left: 1px solid #a0a0a0; padding-left: 1px; border-right: 1px solid #fff; }
.st1 { width: 897px; } .st2 { width: 140px; } .st3 { width: 210px; } .st4 { width: 79px; }
.taskedge { height: 2px; background: linear-gradient(#35506c 50%, #c3d9ec 50%); }
```
